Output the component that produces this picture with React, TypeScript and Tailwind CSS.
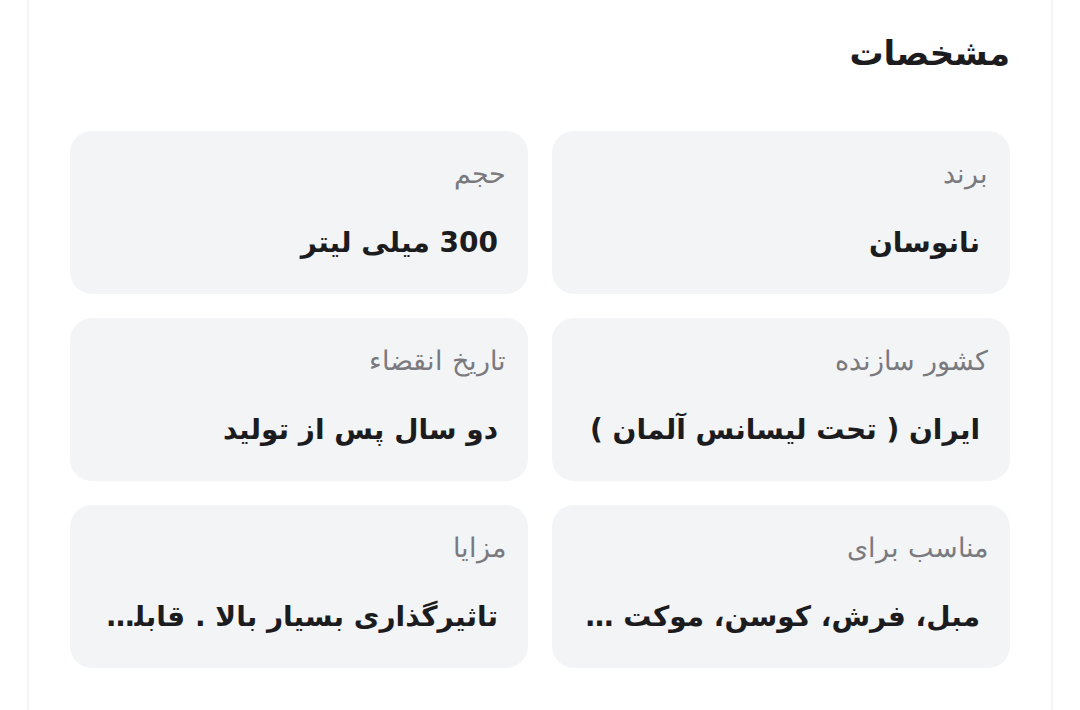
import React from "react";

const items = [
  { label: "برند", value: "نانوسان" },
  { label: "حجم", value: "300 میلی لیتر" },
  { label: "کشور سازنده", value: "ایران ( تحت لیسانس آلمان )" },
  { label: "تاریخ انقضاء", value: "دو سال پس از تولید" },
  { label: "مناسب برای", value: "مبل، فرش، کوسن، موکت ..." },
  { label: "مزایا", value: "تاثیرگذاری بسیار بالا . قابلیت شستشوی آسان و سریع" },
];

export default function App() {
  return (
    <div
      dir="rtl"
      className="w-[1080px] h-[710px] bg-white overflow-hidden"
      style={{ fontFamily: '"DejaVu Sans", "Noto Sans", sans-serif' }}
    >
      <div className="mx-[27px] h-full border-x-2 border-[#f5f6f7] px-[41px] pt-[29px]">
        <h2 className="text-[34px] font-bold text-[#1c1c1e] leading-[48px] mb-[54px]">مشخصات</h2>
        <div className="grid grid-cols-2 gap-x-[24px] gap-y-[24px]">
          {items.map((it) => (
            <div
              key={it.label}
              className="bg-[#f2f4f6] rounded-[22px] h-[163px] pr-[22px] pl-[30px] pt-[24px] flex flex-col"
            >
              <div className="text-[27px] text-[#7a7a7e] leading-[38px] font-light">{it.label}</div>
              <div className="mt-[30px] pr-[8px] text-[28px] font-bold text-[#1c1c1e] leading-[40px] truncate">
                {it.value}
              </div>
            </div>
          ))}
        </div>
      </div>
    </div>
  );
}
